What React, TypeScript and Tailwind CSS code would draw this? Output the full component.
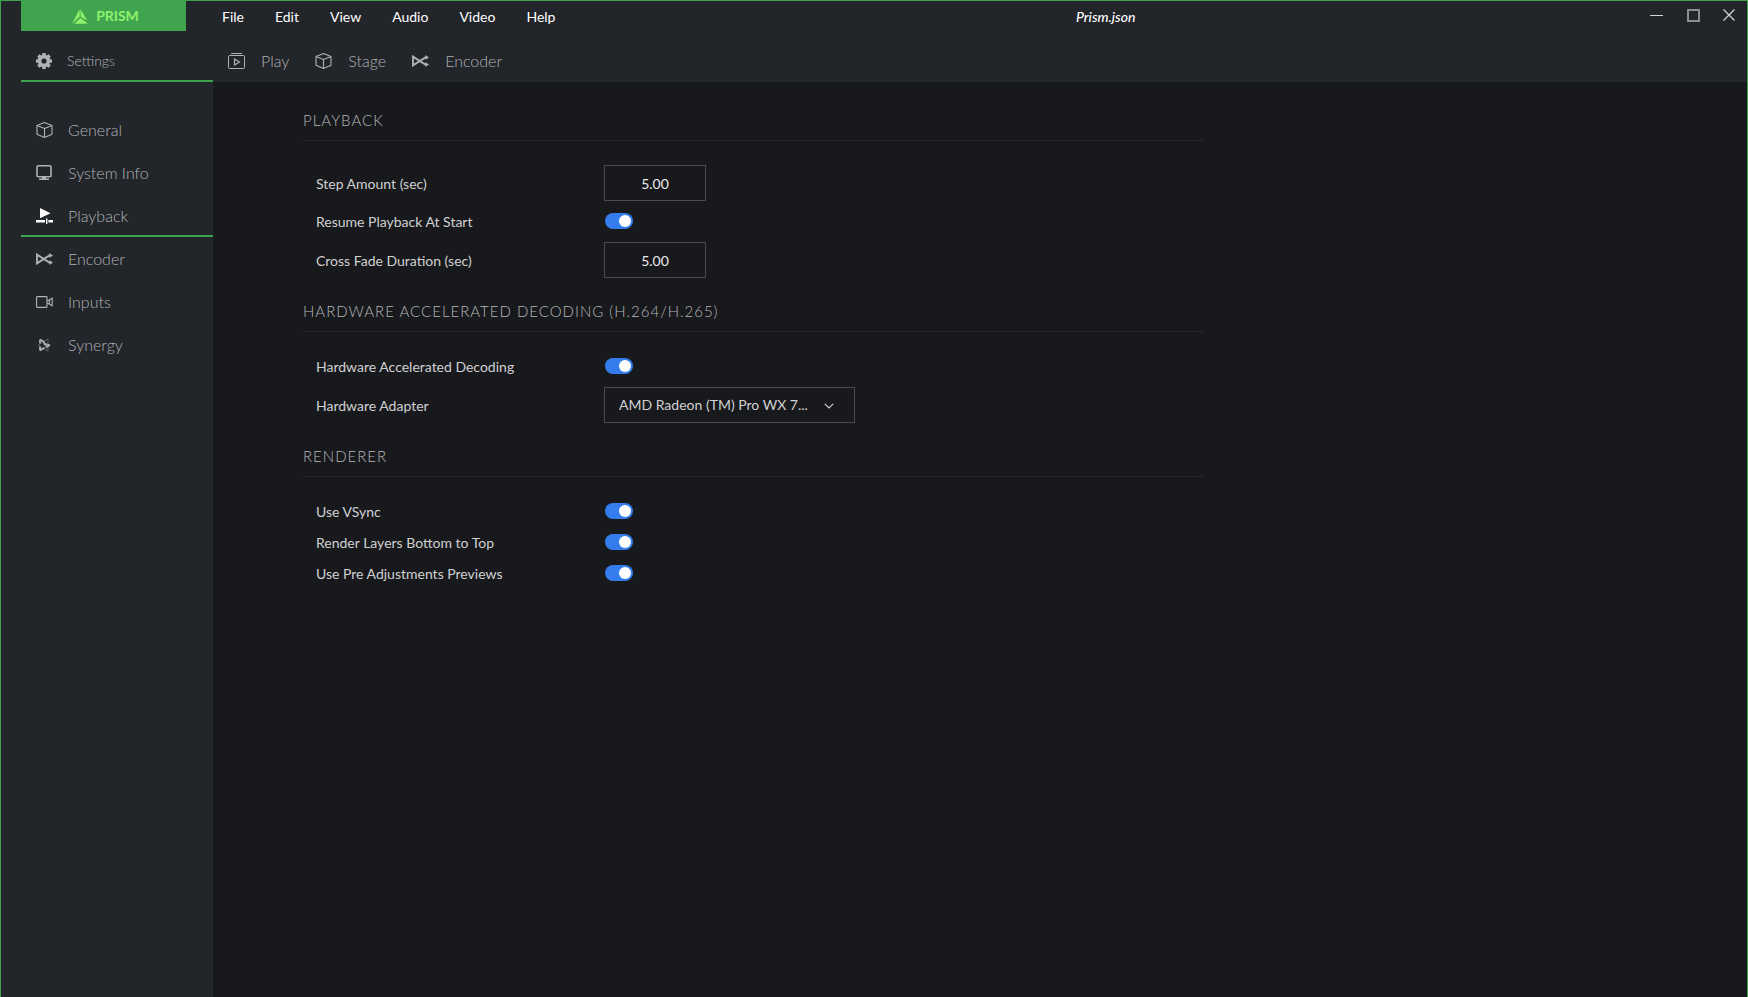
import { useState } from "react";
import type { ReactNode } from "react";
import clsx from "clsx";

const menus = ["File", "Edit", "View", "Audio", "Video", "Help"];

function LogoIcon() {
  return (
    <svg viewBox="0 0 16 15" className="h-[15px] w-4" fill="#8ff06a" aria-hidden>
      <path d="M7.4 0 7.8 7.6 0 14.8 4.4 6.4Z" />
      <path d="M8.3 0 15.4 11.6 8.8 8Z" />
      <path d="M8.4 9 16 14.8H2.4Z" />
    </svg>
  );
}

function GearIcon() {
  return (
    <svg viewBox="0 0 16 16" className="size-4" aria-hidden>
      <g fill="currentColor">
        <rect x="6.2" y="0" width="3.6" height="16" rx="0.6" />
        <rect x="6.2" y="0" width="3.6" height="16" rx="0.6" transform="rotate(45 8 8)" />
        <rect x="6.2" y="0" width="3.6" height="16" rx="0.6" transform="rotate(90 8 8)" />
        <rect x="6.2" y="0" width="3.6" height="16" rx="0.6" transform="rotate(135 8 8)" />
        <circle cx="8" cy="8" r="6.2" />
      </g>
      <circle cx="8" cy="8" r="2.6" fill="#22252a" />
    </svg>
  );
}

function PlayIcon() {
  return (
    <svg viewBox="0 0 17 16" className="h-4 w-[17px]" fill="none" stroke="currentColor" aria-hidden>
      <path d="M3 .5H14" />
      <rect x=".5" y="2.5" width="16" height="13" rx="1" />
      <path d="M6.5 6 11.5 9 6.5 12Z" strokeWidth="1.2" />
    </svg>
  );
}

function CubeIcon() {
  return (
    <svg viewBox="0 0 17 16" className="h-4 w-[17px]" fill="none" stroke="currentColor" strokeWidth="1.1" strokeLinejoin="round" aria-hidden>
      <path d="M8.5.6 16 3.4V12.2L8.5 15.4 1 12.2V3.4Z" />
      <path d="M1 3.4 8.5 6.4 16 3.4M8.5 6.4V15.4" />
    </svg>
  );
}

function EncoderIcon() {
  return (
    <svg viewBox="0 0 17 12" className="h-3 w-[17px]" fill="none" stroke="currentColor" strokeWidth="1.9" aria-hidden>
      <path d="M14.5 2.4H13.4L1 10.4V1.6L13.4 9.6H14.5" />
      <path d="M13.4 0 17 2.4 13.4 4.8ZM13.4 7.2 17 9.6 13.4 12Z" fill="currentColor" stroke="none" />
    </svg>
  );
}

function MonitorIcon() {
  return (
    <svg viewBox="0 0 16 15" className="h-[15px] w-4" fill="none" stroke="currentColor" strokeWidth="1.6" aria-hidden>
      <rect x="1" y=".8" width="14" height="11" rx="1.4" />
      <path d="M8 11.5V14M3 14.2H13" />
      <path d="M6 12H10V14H6Z" fill="currentColor" stroke="none" />
    </svg>
  );
}

function PlaybackIcon() {
  return (
    <svg viewBox="0 0 17 16" className="h-4 w-[17px]" fill="currentColor" aria-hidden>
      <path d="M4 0 14.5 5.2 4 10.2Z" />
      <path d="M0 12H9V14.6H0ZM10 10.5H11.4V16H10ZM12.4 12H17V14.6H12.4Z" />
    </svg>
  );
}

function CameraIcon() {
  return (
    <svg viewBox="0 0 17 12" className="h-3 w-[17px]" fill="none" stroke="currentColor" strokeWidth="1.1" aria-hidden>
      <rect x=".6" y=".6" width="10.4" height="10.8" rx=".6" />
      <path d="M11.2 5 16.2 2.2V9.8L11.2 7" />
      <path d="M13.4 4V8" />
    </svg>
  );
}

function SynergyIcon() {
  return (
    <svg viewBox="0 0 16 14" className="h-3.5 w-4" fill="none" stroke="currentColor" aria-hidden>
      <path d="M4 1.4V5.6M4 1.4 8.6 4.2M14 6.8 9.8 9.6M4 12.4 8.6 9.8M4 12.4V8.4" strokeWidth="1.8" />
      <path d="M7 4.2 13.4 7 8.6 7.4Z" fill="currentColor" strokeWidth=".6" />
      <path d="M12 .8V13.2L2 7.2Z" strokeWidth=".8" opacity=".5" />
    </svg>
  );
}

const tabs = [
  { label: "Play", icon: <PlayIcon /> },
  { label: "Stage", icon: <CubeIcon /> },
  { label: "Encoder", icon: <EncoderIcon /> },
];

const pages = [
  { label: "General", icon: <CubeIcon /> },
  { label: "System Info", icon: <MonitorIcon /> },
  { label: "Playback", icon: <PlaybackIcon /> },
  { label: "Encoder", icon: <EncoderIcon /> },
  { label: "Inputs", icon: <CameraIcon /> },
  { label: "Synergy", icon: <SynergyIcon /> },
];

function Section({ title, children }: { title: string; children: ReactNode }) {
  return (
    <section className="mb-[19px]">
      <h2 className="border-b border-[#26282c] pb-2.5 text-[15px] leading-5 font-light tracking-[1px] text-[#b4b6b9] uppercase">
        {title}
      </h2>
      <div className="pt-[18px] pl-[13px]">{children}</div>
    </section>
  );
}

function ToggleRow({ id, label }: { id: string; label: string }) {
  const [on, setOn] = useState(true);
  return (
    <div className="flex h-[31px] items-center">
      <label htmlFor={id} className="w-[289px] pt-0.5">
        {label}
      </label>
      <input
        id={id}
        type="checkbox"
        role="switch"
        checked={on}
        onChange={() => setOn(!on)}
        className="relative h-4 w-7 appearance-none rounded-full bg-[#4a4d52] before:absolute before:top-0.5 before:left-0.5 before:size-3 before:rounded-full before:bg-white checked:bg-[#357ded] checked:before:left-3.5"
      />
    </div>
  );
}

function FieldRow({ id, label, children }: { id: string; label: string; children: ReactNode }) {
  return (
    <div className="flex items-center pt-1.5 pb-1">
      <label htmlFor={id} className="w-72 pt-0.5">
        {label}
      </label>
      {children}
    </div>
  );
}

function NumberField({ id, label, value }: { id: string; label: string; value: string }) {
  return (
    <FieldRow id={id} label={label}>
      <input
        id={id}
        type="text"
        inputMode="decimal"
        defaultValue={value}
        className="h-9 w-[102px] border border-[#494b4f] bg-transparent text-center text-[#ececec] outline-none"
      />
    </FieldRow>
  );
}

export default function App() {
  const [page, setPage] = useState("Playback");

  return (
    <div className="flex min-h-screen flex-col border-x border-t border-[#3ea34d] bg-[#18191c] font-['Lato',sans-serif] text-sm text-[#d0d1d2]">
      <header className="bg-[#22252a]">
        <div className="flex h-[30px] items-stretch pl-5">
          <div className="flex w-[165px] items-center justify-center gap-2 bg-[#40a44f] pl-1 font-bold text-[#8ff06a]">
            <LogoIcon />
            <span>PRISM</span>
          </div>
          <nav className="flex items-center gap-[31px] pt-0.5 pl-9 text-white">
            {menus.map((m) => (
              <button key={m} type="button">
                {m}
              </button>
            ))}
          </nav>
          <div className="flex-1 pt-1.5 pl-4 text-center font-medium text-white italic">Prism.json</div>
          <div className="flex w-[107px] items-center justify-between pr-3 pb-0.5 pl-2.5 text-[#d5d6d8]">
            <button type="button" aria-label="Minimize">
              <svg viewBox="0 0 13 13" className="size-[13px]" stroke="currentColor">
                <path d="M0 6.5H13" />
              </svg>
            </button>
            <button type="button" aria-label="Maximize">
              <svg viewBox="0 0 13 13" className="size-[13px]" fill="none" stroke="#8b8d90" strokeWidth="2">
                <rect x="1" y="1" width="11" height="11" />
              </svg>
            </button>
            <button type="button" aria-label="Close">
              <svg viewBox="0 0 12 12" className="size-3" stroke="currentColor" strokeWidth="1.2">
                <path d="M.5.5 11.5 11.5M11.5.5.5 11.5" />
              </svg>
            </button>
          </div>
        </div>

        <div className="flex h-[51px] items-stretch pl-5 font-light text-[#b0b2b5]">
          <button type="button" className="flex w-48 items-center gap-[15px] border-b-2 border-[#3ea34d] pt-2.5 pl-[15px] text-sm">
            <GearIcon />
            Settings
          </button>
          <nav className="flex items-center gap-[26px] pt-2 pl-[15px] text-base">
            {tabs.map((t) => (
              <button key={t.label} type="button" className="flex items-center gap-4">
                {t.icon}
                {t.label}
              </button>
            ))}
          </nav>
        </div>
      </header>

      <div className="flex flex-1">
        <aside className="w-[212px] shrink-0 bg-[#22252a] pt-[26px] pl-5">
          {pages.map((p) => (
            <button
              key={p.label}
              type="button"
              onClick={() => setPage(p.label)}
              className={clsx(
                "flex h-[43px] w-full items-center border-b-2 pt-0.5 pl-[15px] text-base font-light text-[#b0b2b5]",
                page === p.label ? "border-[#3ea34d]" : "border-transparent",
              )}
            >
              <span className={clsx("flex w-8", page === p.label && "text-white")}>{p.icon}</span>
              {p.label}
            </button>
          ))}
        </aside>

        <main className="flex-1 pt-7 pl-[90px]">
          <div className="max-w-[900px]">
            <Section title="Playback">
              <NumberField id="step" label="Step Amount (sec)" value="5.00" />
              <ToggleRow id="resume" label="Resume Playback At Start" />
              <NumberField id="fade" label="Cross Fade Duration (sec)" value="5.00" />
            </Section>

            <Section title="Hardware Accelerated Decoding (H.264/H.265)">
              <ToggleRow id="hwdecode" label="Hardware Accelerated Decoding" />
              <FieldRow id="adapter" label="Hardware Adapter">
                <div className="relative">
                  <select
                    id="adapter"
                    className="h-9 w-[251px] appearance-none border border-[#494b4f] bg-transparent pr-10 pl-3.5 outline-none"
                  >
                    <option>AMD Radeon (TM) Pro WX 7...</option>
                  </select>
                  <svg
                    viewBox="0 0 10 6"
                    className="pointer-events-none absolute top-4 right-[21px] h-1.5 w-2.5"
                    fill="none"
                    stroke="currentColor"
                    strokeWidth="1.2"
                    aria-hidden
                  >
                    <path d="M.8.8 5 5 9.2.8" />
                  </svg>
                </div>
              </FieldRow>
            </Section>

            <Section title="Renderer">
              <ToggleRow id="vsync" label="Use VSync" />
              <ToggleRow id="layers" label="Render Layers Bottom to Top" />
              <ToggleRow id="previews" label="Use Pre Adjustments Previews" />
            </Section>
          </div>
        </main>
      </div>
    </div>
  );
}
